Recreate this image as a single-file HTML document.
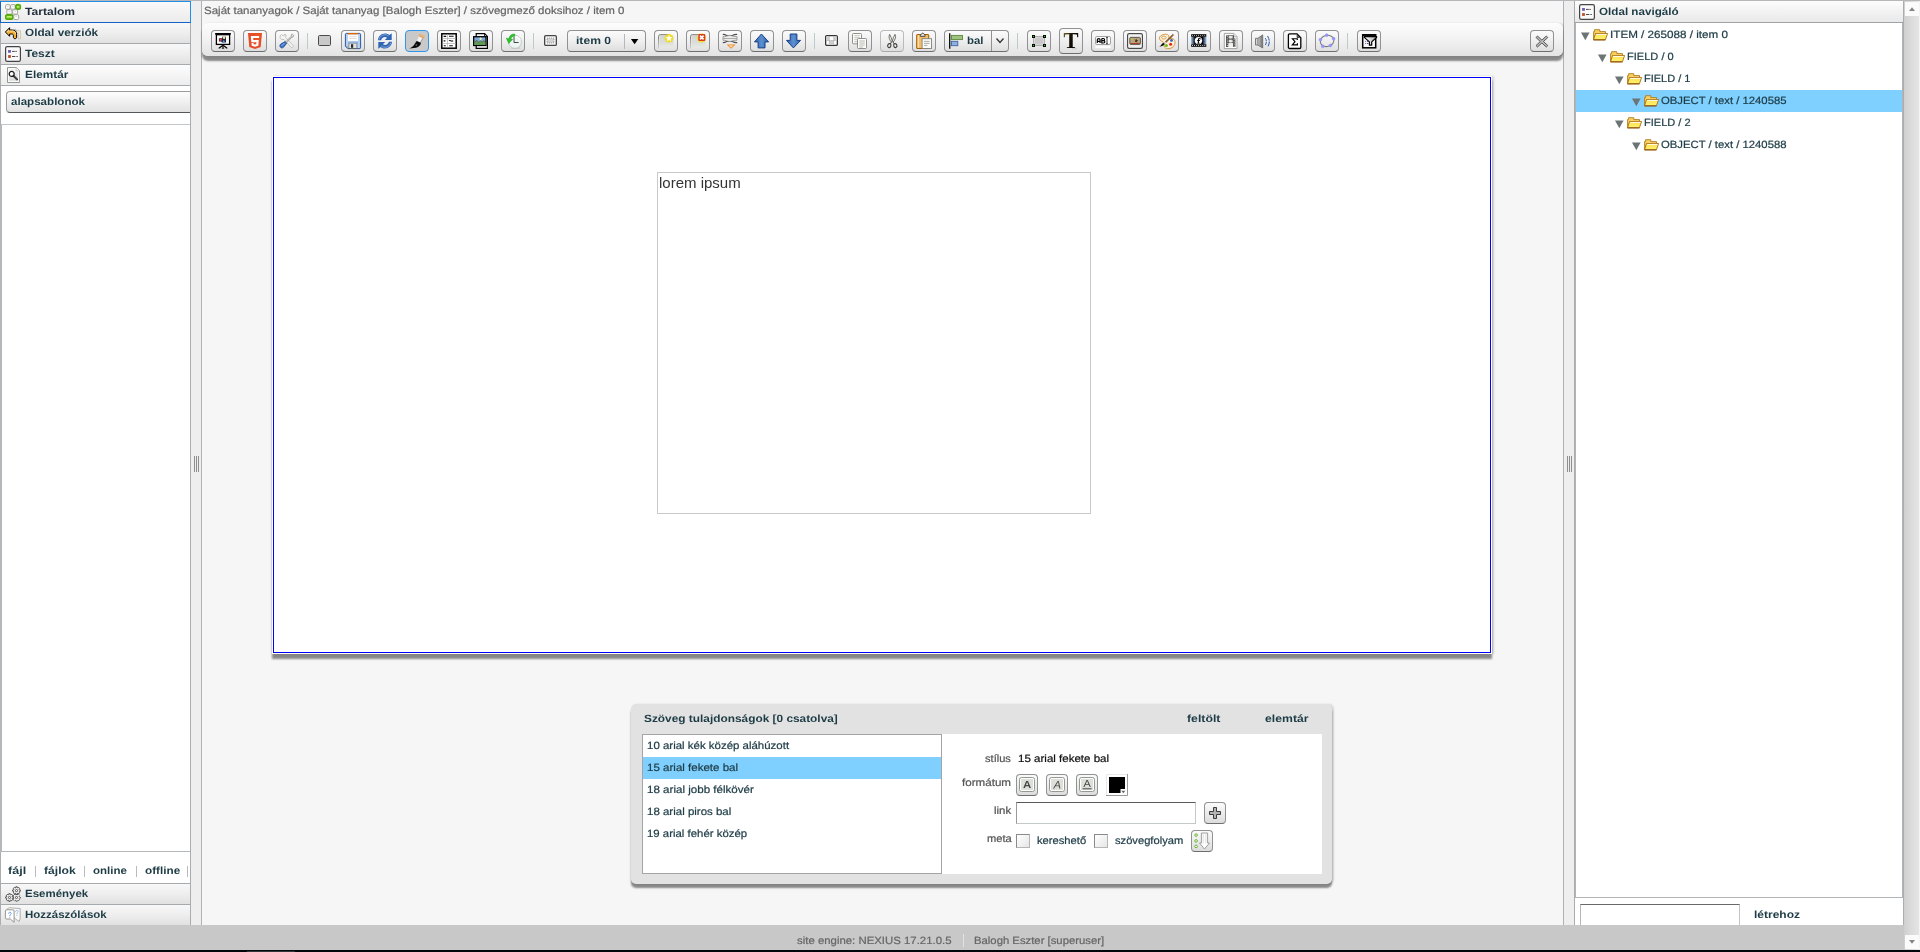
<!DOCTYPE html>
<html><head><meta charset="utf-8"><title>NEXIUS</title>
<style>
*{box-sizing:border-box;margin:0;padding:0}
html,body{width:1920px;height:952px;overflow:hidden;background:#f6f6f6;font-family:"Liberation Sans",sans-serif;font-size:10.5px}
.a{position:absolute}
.t{position:absolute;white-space:nowrap;line-height:14px;height:14px;transform-origin:0 0;font-size:10.5px}
.hd{position:absolute;left:0;width:191px;height:21px;background:linear-gradient(#f8f8f8,#eeeeee 50%,#e1e1e1);border-left:1px solid #a9adb0;border-right:1px solid #a9adb0;border-bottom:1px solid #a7aaad}
.btn{position:absolute;top:30px;width:24px;height:22px;border:1px solid #8f9193;border-bottom-color:#6c6e70;border-radius:4px;background:linear-gradient(#fbfbfb,#efefef 50%,#dedede)}
.btn svg,.ico svg{position:absolute;left:3px;top:2px;width:16px;height:16px;overflow:visible}
.ico{position:absolute}
.sep{position:absolute;top:33px;width:1px;height:16px;background:#bccccc}
.sb{position:absolute;width:22px;height:22px;border:1px solid #8f9193;border-bottom-color:#6c6e70;border-radius:4px;background:linear-gradient(#fbfbfb,#ececec 50%,#dcdcdc)}
</style></head><body>
<!-- top line -->
<div class="a" style="left:0;top:0;width:1920px;height:1px;background:#b9b6b9"></div>
<div class="a" style="left:0;top:1px;width:1920px;height:1px;background:#d2d0d2"></div>

<!-- LEFT PANEL -->
<div class="a" style="left:0;top:1px;width:191px;height:925px;background:#fff;border-left:1px solid #a9adb0;border-right:1px solid #a9adb0"></div>
<div class="hd" style="top:1px;height:22px;border:1px solid #1f8fe8;border-bottom-color:#1663c7;border-left-color:#1663c7;background:linear-gradient(#fafafa,#f2f2f2 50%,#ebebeb)"></div>
<div class="hd" style="top:23px"></div>
<div class="hd" style="top:44px"></div>
<div class="hd" style="top:65px;background:linear-gradient(#fdfdfd,#f5f5f5 50%,#ededed)"></div>
<!-- alapsablonok button -->
<div class="a" style="left:6px;top:91px;width:184px;height:22px;border:1px solid #9a9c9e;border-right:0;border-bottom-color:#55585a;border-radius:4px 0 0 4px;background:linear-gradient(#fdfdfd,#f0f0f0 50%,#e2e2e2)"></div>
<div class="a" style="left:1px;top:124px;width:189px;height:1px;background:#c3c7ca"></div>
<div class="a" style="left:0;top:125px;width:2px;height:727px;background:#b4b8bb"></div>
<div class="a" style="left:1px;top:851px;width:189px;height:1px;background:#b4b8bb"></div>
<!-- file links separators -->
<div class="a" style="left:35px;top:866px;width:1px;height:11px;background:#b7bcbf"></div>
<div class="a" style="left:84px;top:866px;width:1px;height:11px;background:#b7bcbf"></div>
<div class="a" style="left:136px;top:866px;width:1px;height:11px;background:#b7bcbf"></div>
<div class="a" style="left:187px;top:866px;width:1px;height:11px;background:#b7bcbf"></div>
<div class="hd" style="top:883px;height:22px;border-top:1px solid #a7aaad"></div>
<div class="hd" style="top:905px"></div>
<div class="a" style="left:191px;top:1px;width:10px;height:925px;background:#eee"></div>
<!-- left splitter grip -->
<div class="a" style="left:194px;top:456px;width:1px;height:16px;background:#8e8e8e"></div>
<div class="a" style="left:196px;top:456px;width:1px;height:16px;background:#8e8e8e"></div>
<div class="a" style="left:198px;top:456px;width:1px;height:16px;background:#8e8e8e"></div>

<!-- CENTER -->
<div class="a" style="left:201px;top:1px;width:1363px;height:925px;background:#f6f6f6;border-left:1px solid #adb3b8;border-right:1px solid #adb3b8"></div>
<!-- toolbar -->
<div class="a" style="left:202px;top:23px;width:1361px;height:33px;border-radius:6px;background:linear-gradient(#fdfdfd,#f2f2f2 50%,#e3e3e3);box-shadow:0 4.5px 2px rgba(0,0,0,.45),1.5px 0 2px rgba(0,0,0,.13)"></div>
<div class="sep" style="left:307px"></div>
<div class="sep" style="left:533px"></div>
<div class="sep" style="left:814px"></div>
<div class="sep" style="left:1017px"></div>
<div class="sep" style="left:1347px"></div>
<div class="btn" style="left:211px"><svg viewBox="0 0 16 16"><rect x="0" y="0" width="16" height="1.800" rx=".7" fill="#000"/><rect x="1.400" y="1.700" width="13.200" height="9.700" fill="#fff" stroke="#000" stroke-width="1.300"/><path d="M3.900 5.200h3.300V3.800h3.800v5.800H6.900L6.200 8.600H3.900z" fill="#1b2440"/><rect x="4.600" y="5.700" width="2.100" height="2.100" fill="#ee4426"/><circle cx="9.100" cy="4.800" r="1.250" fill="#ffe88c"/><path d="M7.200 9.200L8.700 6.700l1.500 2.500z" fill="#5f90d2"/><path d="M8 11.500V16" stroke="#000" stroke-width="1.200"/><path d="M7.300 12.700L4.200 14.900M8.700 12.700L11.800 14.900" stroke="#000" stroke-width="1.200" stroke-linecap="round"/><ellipse cx="8" cy="15.300" rx="6.500" ry=".6" fill="#000" opacity=".1"/></svg></div>
<div class="btn" style="left:243px"><svg viewBox="0 0 16 16"><path d="M1 0h14l-1.300 13.900L8 16l-5.700-2.100z" fill="#e44d26"/><path d="M8 1.100v13.700l4.600-1.700 1.100-12z" fill="#ea5528"/><path d="M3.800 2.900h8.400l-.2 2.200H6.200l.15 1.900h5.450l-.5 5.700L8 13.700l-3.300-1-.2-2.700h2.100l.1 1.200L8 11.500l1.300-.3.150-2H4.300z" fill="#fff"/></svg></div>
<div class="btn" style="left:275px"><svg viewBox="0 0 16 16"><path d="M1.300 2.700l1.300-1.300 1.300 1.500 1.200-.1.500-1.600 1.500.8-.5 2.600 7.200 7.700c.6.700.5 1.400 0 1.900s-1.300.4-1.900-.2L5 6.400 2.700 6.700 1 4.400z" fill="#f6f6f4" stroke="#b4b5ae" stroke-width=".8"/><path d="M12.900.9l1.900 1.500-.9 1.700-1.100.1-5 5.400-.9-.9 5.100-5.200z" fill="#e4e4e2" stroke="#7f807a" stroke-width=".7"/><path d="M12.900 1.600l1.100.9" stroke="#fff" stroke-width=".7"/><path d="M6 8.600l1.700 1.600-3 3.900c-.9 1-2.300 1.100-3.200.2-.9-.9-.8-2.300.2-3.200z" fill="#3f74c0" stroke="#1d4a94" stroke-width=".8"/><path d="M2.600 12.900l2.700-2.700" stroke="#9dbcea" stroke-width="1"/></svg></div>
<div class="btn" style="left:341px"><svg viewBox="0 0 16 16"><path d="M1.300.4h13.400c.5 0 .9.400.9.900v13.400c0 .5-.4.900-.9.900H2.800L.4 13.200V1.300c0-.5.400-.9.900-.9z" fill="#8fb4e3" stroke="#1f4e9c" stroke-width=".9"/><path d="M1.300 1h1.500v12.300l-1.500-.5z" fill="#c6dbf4"/><path d="M13.200 1h1.500v14h-1.500z" fill="#c6dbf4"/><rect x="3" y="0" width="10" height="1.600" fill="#e06a00"/><rect x="3" y="1.600" width="10" height="6.400" fill="#fff"/><path d="M4.200 3.800h7.600M4.200 5.600h7.600" stroke="#d0d0d0" stroke-width=".7"/><rect x="3" y="7.800" width="10" height=".6" fill="#dfe9f6"/><rect x="4" y="10.200" width="7.800" height="5.500" fill="#e3e3e0" stroke="#777" stroke-width=".5"/><rect x="6" y="11.200" width="2.200" height="3.600" fill="#2b2b2b"/><rect x="4" y="15.200" width="7.800" height=".8" fill="#555"/></svg></div>
<div class="btn" style="left:373px"><svg viewBox="0 0 16 16"><path d="M1 7.300C1.200 3.400 4.300.6 8 .6c1.700 0 3.200.5 4.400 1.500L14.700.2v6.900H7.800l2.300-2.400C9.500 4.200 8.800 4 8 4 5.900 4 4.400 5.400 4.200 7.300z" fill="#2f66b3"/><path d="M15 8.700c-.2 3.900-3.300 6.700-7 6.700-1.700 0-3.200-.5-4.400-1.500L1.300 15.800V8.900h6.900l-2.300 2.400c.6.500 1.300.7 2.100.7 2.100 0 3.600-1.400 3.800-3.300z" fill="#2f66b3"/><path d="M2.200 6.300C2.800 3.600 5.200 1.700 8 1.700c1.500 0 2.800.5 3.800 1.400" stroke="#7fa8dd" stroke-width=".9" fill="none"/><path d="M13.800 9.700c-.6 2.700-3 4.600-5.800 4.600-1.500 0-2.800-.5-3.800-1.400" stroke="#7fa8dd" stroke-width=".9" fill="none"/></svg></div>
<div class="btn" style="left:405px;background:#c9c9c9;border-color:#2f96ee"><svg viewBox="0 0 16 16"><g transform="translate(13.030 2.320) rotate(26)"><rect x="-2.900" y="-.4" width="5.800" height="2.900" fill="#e3a463"/><path d="M-2.700 .5h5.400" stroke="#f2c797" stroke-width=".6"/><path d="M-2.700 2.400H2.700L2.200 7.400H-2.200z" fill="#f4f4f4"/><path d="M1.500 2.400H2.700L2.200 7.400H1.200z" fill="#9a9a9a"/><path d="M-2.700 2.400h.8l.2 5h-.5z" fill="#d6d6d6"/></g><path d="M7.840 7.920L11.800 9.860C12 11.500 11 13 9 14 6.500 15.200 3.500 15 .4 15.600 2.400 14.600 3.800 13.600 4.800 12.300 5.800 11 6.400 9.200 7.840 7.920z" fill="#0a0a0a"/><circle cx="7.400" cy="12" r=".9" fill="#5c5c5c"/></svg></div>
<div class="btn" style="left:437px"><svg viewBox="0 0 16 16"><rect x=".8" y=".8" width="14.400" height="14.400" fill="#fff" stroke="#000" stroke-width="1.500"/><path d="M6.500 1.500v13M1.500 5.500h13M1.500 10.500h13" stroke="#b8b8b8" stroke-width=".8"/><path d="M2.600 3.400h2.600M8 3.200h4.600M2.600 7.900h1.800M8 7.800c1.200-1 2.200 1.200 4.200 0M2.800 12.800h2M8.200 12.800h3.600" stroke="#111" stroke-width="1.100" fill="none"/></svg></div>
<div class="btn" style="left:469px"><svg viewBox="0 0 16 16"><path d="M3.200.6h8.400L14.400 3.400v12H3.200z" fill="#fff" stroke="#000" stroke-width="1.200"/><path d="M11.500.8v2.800h2.800" fill="none" stroke="#000" stroke-width=".8"/><rect x=".7" y="3.700" width="12.300" height="8.800" fill="#7ea9da" stroke="#000" stroke-width="1.300"/><path d="M1.400 9.500l2.200-2.400 2 2.300 2-1.700 1.700 1.300 1.500-1.600 1.600 2V11.900H1.400z" fill="#5d9a52"/><path d="M1.400 9.500l2.200-2.400 2 2.300 2-1.700 1.700 1.300 1.500-1.600 1.600 2" fill="none" stroke="#5a3a1a" stroke-width=".5"/><path d="M7.600 4.200l.6 1.100 1.100.5-1.100.6-.6 1.100-.6-1.100-1.100-.6 1.100-.5z" fill="#fff7a8"/></svg></div>
<div class="btn" style="left:501px"><svg viewBox="0 0 16 16"><ellipse cx="10.500" cy="15" rx="5" ry=".9" fill="#000" opacity=".12"/><circle cx="10" cy="8.800" r="6.500" fill="#eef6f4" stroke="#b9c2c0" stroke-width=".8"/><path d="M5 9.500a5.500 5.500 0 0 1 10.400-2.500" fill="none" stroke="#fff" stroke-width="1.200" opacity=".8"/><path d="M9 3.600v5.900h4.600" fill="none" stroke="#333" stroke-width=".9"/><path d="M9.700 1C6.600.8 4.300 2.700 3.900 5.700L1.300 5.200l2.500 5.300 3.800-4.300-1.800-.3C6.200 4.200 7.600 3.100 9.700 3.200z" fill="#2fc22f" stroke="#1f9a1f" stroke-width=".5"/></svg></div>
<div class="btn" style="left:654px"><svg viewBox="0 0 16 16"><defs><linearGradient id="tg1" x1="0" y1="0" x2="0" y2="1"><stop offset="0" stop-color="#d3d6d0"/><stop offset=".55" stop-color="#dcded9"/><stop offset="1" stop-color="#e9ebe7" stop-opacity=".6"/></linearGradient><linearGradient id="tb1" x1="0" y1="0" x2="0" y2="1"><stop offset="0" stop-color="#666"/><stop offset="1" stop-color="#999" stop-opacity=".3"/></linearGradient></defs><path d="M.5 15.500V3.400c0-.900.600-1.600 1.600-1.600h9.500" fill="none" stroke="url(#tb1)" stroke-width="1"/><path d="M1.400 15.500V3.800c0-.600.400-1 1-1H15.500v12.700z" fill="url(#tg1)"/><circle cx="11" cy="5.200" r="4.300" fill="#f2dc1a" opacity=".9"/><path d="M11 1.900l1 2.100 2.300.3-1.700 1.600.4 2.300-2-1.100-2 1.100.4-2.300-1.700-1.600 2.300-.3z" fill="#fffef0"/></svg></div>
<div class="btn" style="left:686px"><svg viewBox="0 0 16 16"><defs><linearGradient id="tg2" x1="0" y1="0" x2="0" y2="1"><stop offset="0" stop-color="#d3d6d0"/><stop offset=".55" stop-color="#dcded9"/><stop offset="1" stop-color="#e9ebe7" stop-opacity=".6"/></linearGradient><linearGradient id="tb2" x1="0" y1="0" x2="0" y2="1"><stop offset="0" stop-color="#666"/><stop offset="1" stop-color="#999" stop-opacity=".3"/></linearGradient></defs><path d="M.5 15.500V3.400c0-.900.600-1.600 1.600-1.600h9.500" fill="none" stroke="url(#tb2)" stroke-width="1"/><path d="M1.400 15.500V3.800c0-.600.400-1 1-1H15.500v12.700z" fill="url(#tg2)"/><circle cx="11.500" cy="5" r="4.700" fill="#f2e21a" opacity=".75"/><rect x="8.300" y="1" width="7" height="7" rx="1.100" fill="#dc3a1c"/><path d="M10 2.700l3.600 3.600M13.600 2.700L10 6.300" stroke="#fff" stroke-width="1.700"/></svg></div>
<div class="btn" style="left:718px"><svg viewBox="0 0 16 16"><path d="M.8 1.500c2.500-.6 3.800 1.700 6.700 1.700s4.500-2.300 7.700-1.700M.8 9.500c2.500.6 3.800-1.700 6.700-1.700s4.500 2.300 7.700 1.700" fill="none" stroke="#4a4c48" stroke-width="1.200"/><path d="M1 3.600c2.600.5 4-1.200 6.600-1.200s4.200 1.700 7.400 1.200v3.700c-3.200-.5-4.800 1.200-7.400 1.200S3.600 6.800 1 7.300z" fill="#ecedeb" stroke="#7a7c78" stroke-width=".7"/><path d="M1.200 5.500h13.600" stroke="#9a9c98" stroke-width=".8"/><path d="M4.600 11.400h9L9.100 15.800z" fill="#f08a24"/><path d="M6.600 12.300h5L9.100 14.700z" fill="#fbd3a4"/></svg></div>
<div class="btn" style="left:750px"><svg viewBox="0 0 16 16"><defs><linearGradient id="ua" x1="0" y1="0" x2="1" y2="0"><stop offset="0" stop-color="#2f62a8"/><stop offset=".5" stop-color="#5c90d2"/><stop offset="1" stop-color="#2f62a8"/></linearGradient></defs><path d="M7.400 1L14.600 8.900H11V14.900H4.100V8.900H.5z" fill="url(#ua)" stroke="#173f86" stroke-width="1" stroke-linejoin="round"/></svg></div>
<div class="btn" style="left:782px"><svg viewBox="0 0 16 16"><defs><linearGradient id="da" x1="0" y1="0" x2="1" y2="0"><stop offset="0" stop-color="#2f62a8"/><stop offset=".5" stop-color="#5c90d2"/><stop offset="1" stop-color="#2f62a8"/></linearGradient></defs><path d="M7.400 14.900L14.600 7.400H10.900V1H4.200V7.400H.5z" fill="url(#da)" stroke="#173f86" stroke-width="1" stroke-linejoin="round"/></svg></div>
<div class="btn" style="left:848px"><svg viewBox="0 0 16 16"><rect x=".5" y=".5" width="9" height="10.300" rx=".9" fill="#fdfdfc" stroke="#83857f" stroke-width=".9"/><path d="M2.300 2.700h5.500M2.300 4.700h5.500M2.300 6.700h3M2.300 8.700h3" stroke="#b9bbb4" stroke-width=".9"/><rect x="5.500" y="5.500" width="9" height="10" rx=".9" fill="#fdfdfc" stroke="#83857f" stroke-width=".9"/><path d="M7.300 8h5.500M7.300 10h5.500M7.300 12h5.500M7.300 14h3.800" stroke="#b0b2ab" stroke-width=".9"/></svg></div>
<div class="btn" style="left:880px;border-color:#b9bbbd;border-bottom-color:#a6a8aa"><svg viewBox="0 0 16 16"><path d="M5.600 1.400C4.300 4 5.400 6.700 7.400 9.200L8.200 8C7.600 5.600 6.900 3.400 5.600 1.400z" fill="#f2f2ee" stroke="#3d3d3a" stroke-width=".7"/><path d="M11 1.400c1.300 2.600.2 5.300-1.800 7.800L8.400 8c.6-2.400 1.300-4.600 2.600-6.600z" fill="#f2f2ee" stroke="#3d3d3a" stroke-width=".7"/><path d="M7.400 9.200L6.300 11M9.200 9.200l1.100 1.800" stroke="#3d3d3a" stroke-width="1"/><ellipse cx="5.300" cy="12.600" rx="1.600" ry="2" fill="none" stroke="#3d3d3a" stroke-width="1.100" transform="rotate(20 5.300 12.600)"/><ellipse cx="11.300" cy="12.600" rx="1.600" ry="2" fill="none" stroke="#3d3d3a" stroke-width="1.100" transform="rotate(-20 11.300 12.600)"/></svg></div>
<div class="btn" style="left:912px"><svg viewBox="0 0 16 16"><rect x=".7" y="1.500" width="12" height="14" rx="1" fill="#f3bd6a" stroke="#a8620a" stroke-width="1.100"/><path d="M1.700 2.600h1.300v12h-1.300z" fill="#fbe0b0"/><path d="M4.300 3.300C4.300 1.800 5 .9 5.700.9c.2-.6.600-.8 1-.8s.8.200 1 .8C8.400.9 9.100 1.800 9.100 3.300z" fill="#eceeea" stroke="#2e3436" stroke-width=".9"/><rect x="6.100" y="5.700" width="9.400" height="9.800" fill="#fafaf8" stroke="#7f817b" stroke-width=".9"/><path d="M8 8.400h5.600M8 10.400h5.600M8 12.400h3.400" stroke="#aaaca6" stroke-width="1"/></svg></div>
<div class="btn" style="left:1027px"><svg viewBox="0 0 16 16"><rect x="2.500" y="3.500" width="11" height="9" fill="#c9c9c9" stroke="#a2a2a2" stroke-width=".8"/><rect x="3.300" y="4.300" width="9.400" height="7.400" fill="none" stroke="#e6e6e6" stroke-width=".5"/><rect x="1" y="2" width="3" height="3" fill="#000"/><rect x="1.9" y="2.9" width="1.200" height="1.200" fill="#19d019"/><rect x="12" y="2" width="3" height="3" fill="#000"/><rect x="12.9" y="2.9" width="1.200" height="1.200" fill="#19d019"/><rect x="1" y="11" width="3" height="3" fill="#000"/><rect x="1.9" y="11.9" width="1.200" height="1.200" fill="#19d019"/><rect x="12" y="11" width="3" height="3" fill="#000"/><rect x="12.9" y="11.9" width="1.200" height="1.200" fill="#19d019"/></svg></div>
<div class="btn" style="left:1059px;top:28px;height:26px"><svg style="top:4px" viewBox="0 0 16 16"><defs><linearGradient id="tgr" x1="0" y1="0" x2="1" y2="1"><stop offset="0" stop-color="#7a6426"/><stop offset=".3" stop-color="#1a1408"/><stop offset="1" stop-color="#000"/></linearGradient></defs><path d="M1.300 1.100l.9 .9 M9 15.800h5" stroke="#000" stroke-width="1" opacity=".12"/><path d="M3.87 15.1V14.28L6.23 13.97V1.19H5.66Q3.13 1.19 2.1 1.42L1.81 4.22H0.8V0H15.2V4.22H14.18L13.88 1.42Q12.97 1.22 10.26 1.22H9.72V13.97L12.07 14.28V15.1Z" fill="url(#tgr)"/></svg></div>
<div class="btn" style="left:1091px"><svg viewBox="0 0 16 16"><rect x=".4" y="12.600" width="15.200" height="2.600" fill="#fff" opacity=".9"/><rect x=".5" y="3.500" width="15" height="8" rx="1.500" fill="#fff" stroke="#9a9a9a" stroke-width=".9"/><path d="M2.300 10 V6.700 C2.300 5.200 5.100 5.200 5.100 6.700 V10 M2.300 8.300 H5.100" fill="none" stroke="#000" stroke-width="1.200"/><path d="M6.800 5.500 V10 H8.700 C10.200 10 10.200 7.700 8.700 7.700 H6.800 M6.800 5.500 H8.500 C9.900 5.500 9.900 7.700 8.500 7.700" fill="none" stroke="#000" stroke-width="1.200"/><path d="M11 4.300 C11.700 4.300 12 4.600 12 5.100 V10.200 C12 10.700 11.700 11 11 11 M13 4.300 C12.300 4.300 12 4.600 12 5.100 M12 10.200 C12 10.700 12.300 11 13 11" fill="none" stroke="#111" stroke-width=".8"/></svg></div>
<div class="btn" style="left:1123px"><svg viewBox="0 0 16 16"><rect x=".6" y=".6" width="14.800" height="14.800" rx="1.600" fill="#fff" stroke="#484848" stroke-width="1.200"/><rect x="2.300" y="2.300" width="11.400" height="11.400" fill="#ececec"/><rect x="2.800" y="4.400" width="10.600" height="7" rx=".8" fill="#bfa27a" stroke="#4e4e4e" stroke-width=".9"/><rect x="3.300" y="10" width="9.600" height="1" fill="#a8432a"/><circle cx="4.700" cy="6.300" r=".9" fill="#a6d83a"/><path d="M9.200 5.200l.6 1.700 1.700.4-1.500.8.300 1.800-1.100-1.200-1.600.6.900-1.500-1.200-1.300 1.700.2z" fill="#3a3226"/></svg></div>
<div class="btn" style="left:1155px"><svg viewBox="0 0 16 16"><path d="M5.300 1.300c2.300-.5 4.300.4 4.600 2 .2 1.200-.6 2-.1 2.400 1-.4 3.300-1 5 .6 2.300 2.200 1.300 6.300-1.600 8.200-2.700 1.700-6.600 1.600-7.900-.6-.8-1.400.3-2.600 0-3.900C4.900 8.400.7 8.600.4 5.400.2 3.300 2.700 1.800 5.300 1.300z" fill="#fbf2dc" stroke="#d4902e" stroke-width=".9"/><ellipse cx="4.900" cy="4.600" rx="2.200" ry="1.500" fill="#f2f2f2" stroke="#d4902e" stroke-width=".8"/><circle cx="12.500" cy="7.400" r="1.400" fill="#2d62c0"/><circle cx="11.600" cy="11.300" r="1.500" fill="#e8241a"/><circle cx="7.400" cy="12.400" r="1.500" fill="#6cba1e"/><path d="M13.800 1.200l.9.900-7.700 7.600-.9-.9z" fill="#8a5a2a" stroke="#6b4218" stroke-width=".4"/><path d="M6.100 8.800l.9.900-1.300 1.300-.9-.9z" fill="#f4f4f4" stroke="#888" stroke-width=".3"/><path d="M4.800 10.100l.9.900c-.6 1.500-2.600 2.400-5.400 2.700 1.500-.7 1.600-1.500 2.300-2.400.6-.8 1.300-1.200 2.200-1.200z" fill="#111"/></svg></div>
<div class="btn" style="left:1187px"><svg viewBox="0 0 16 16"><defs><linearGradient id="fl" x1="0" y1="0" x2="1" y2="0"><stop offset="0" stop-color="#b4c4d8"/><stop offset=".12" stop-color="#54749c"/><stop offset=".26" stop-color="#050505"/><stop offset=".74" stop-color="#050505"/><stop offset=".88" stop-color="#54749c"/><stop offset="1" stop-color="#b4c4d8"/></linearGradient></defs><rect x="0" y="3.500" width="15.500" height="8.200" fill="url(#fl)"/><rect x=".2" y="1.200" width="15.100" height="2.500" fill="#000"/><rect x=".2" y="11.400" width="15.100" height="2.400" fill="#000"/><rect x="1.00" y="2" width="1" height="1" rx=".4" fill="#fff"/><rect x="3.05" y="2" width="1" height="1" rx=".4" fill="#fff"/><rect x="5.10" y="2" width="1" height="1" rx=".4" fill="#fff"/><rect x="7.15" y="2" width="1" height="1" rx=".4" fill="#fff"/><rect x="9.20" y="2" width="1" height="1" rx=".4" fill="#fff"/><rect x="11.25" y="2" width="1" height="1" rx=".4" fill="#fff"/><rect x="13.30" y="2" width="1" height="1" rx=".4" fill="#fff"/><rect x="1.00" y="12.100" width="1" height="1" rx=".4" fill="#fff"/><rect x="3.05" y="12.100" width="1" height="1" rx=".4" fill="#fff"/><rect x="5.10" y="12.100" width="1" height="1" rx=".4" fill="#fff"/><rect x="7.15" y="12.100" width="1" height="1" rx=".4" fill="#fff"/><rect x="9.20" y="12.100" width="1" height="1" rx=".4" fill="#fff"/><rect x="11.25" y="12.100" width="1" height="1" rx=".4" fill="#fff"/><rect x="13.30" y="12.100" width="1" height="1" rx=".4" fill="#fff"/><circle cx="7.500" cy="7.600" r="3.700" fill="#fff"/><path d="M9.600 5.600C8.300 5 7.400 5.600 7.400 6.900v3.300M6.200 7.500h2.700M6.400 10.300h2.200" stroke="#000" stroke-width="1.100" fill="none"/><rect x="8.600" y="5.200" width="2.200" height="1.800" fill="#999" opacity=".7"/></svg></div>
<div class="btn" style="left:1219px"><svg viewBox="0 0 16 16"><path d="M1.300.4h9.500l3.200 3.200v12H1.300z" fill="#fdfdfd" stroke="#9c9c9c" stroke-width=".9"/><path d="M10.700.6v3.100h3.100" fill="#e4e4e4" stroke="#9c9c9c" stroke-width=".7"/><rect x="3" y="2.400" width="2.500" height="11.600" fill="#4c4c4a"/><rect x="9.900" y="5.400" width="2.500" height="8.600" fill="#4c4c4a"/><path d="M9.900 2.400h1v3h-1z" fill="#4c4c4a"/><rect x="5.500" y="2.700" width="4.400" height="3.100" fill="#dededc" stroke="#4c4c4a" stroke-width=".7"/><rect x="5.500" y="6.500" width="4.400" height="3.300" fill="#dededc" stroke="#4c4c4a" stroke-width=".7"/><path d="M7.700 2.700v3.100M5.500 4.200h4.400M7.700 6.500v3.300M5.500 8.100h4.400" stroke="#f4f4f4" stroke-width=".5"/><rect x="5.500" y="10.500" width="4.400" height="3.500" fill="#f0f0f0"/><rect x="3.800" y="3.20" width=".9" height="1" fill="#e8e8e8"/><rect x="3.800" y="5.40" width=".9" height="1" fill="#e8e8e8"/><rect x="3.800" y="7.60" width=".9" height="1" fill="#e8e8e8"/><rect x="3.800" y="9.80" width=".9" height="1" fill="#e8e8e8"/><rect x="3.800" y="12.00" width=".9" height="1" fill="#e8e8e8"/><rect x="10.700" y="6.20" width=".9" height="1" fill="#e8e8e8"/><rect x="10.700" y="8.40" width=".9" height="1" fill="#e8e8e8"/><rect x="10.700" y="10.60" width=".9" height="1" fill="#e8e8e8"/><rect x="10.700" y="12.80" width=".9" height="1" fill="#e8e8e8"/></svg></div>
<div class="btn" style="left:1251px"><svg viewBox="0 0 16 16"><defs><linearGradient id="sp" x1="0" y1="0" x2="1" y2="0"><stop offset="0" stop-color="#e4e4e4"/><stop offset=".5" stop-color="#b0b0b0"/><stop offset="1" stop-color="#707070"/></linearGradient></defs><path d="M.5 5.300h2.300L7.700 1.900v13.100L2.800 12H.5z" fill="url(#sp)" stroke="#6e6e6e" stroke-width=".9" stroke-linejoin="round"/><path d="M2.800 5.300v6.700" stroke="#777" stroke-width=".7"/><path d="M10.300 5.200c1.400 2 1.400 5 0 6.900" fill="none" stroke="#2c5cab" stroke-width="1" stroke-dasharray="3.200 .7 3.200"/><path d="M12.500 3c2.400 3.300 2.400 8 0 11.300" fill="none" stroke="#2c5cab" stroke-width="1" stroke-dasharray="5 .8 5"/></svg></div>
<div class="btn" style="left:1283px"><svg viewBox="0 0 16 16"><path d="M2.700.9h7.300l3.800 3.800v9.500c0 .8-.5 1.300-1.300 1.300H2.700c-.8 0-1.300-.5-1.300-1.300V2.200c0-.8.500-1.300 1.300-1.300z" fill="#fff" stroke="#000" stroke-width="1.300"/><path d="M9.600 1.300l3.800 3.800h-2.700c-.7 0-1.100-.4-1.100-1.100z" fill="#4a4a4a"/><path d="M10.300 7.100V5.700H5.400L8 8.700 5.300 11.800h5.100V10.300" fill="none" stroke="#000" stroke-width="1.150"/></svg></div>
<div class="btn" style="left:1315px"><svg viewBox="0 0 16 16"><ellipse cx="8.100" cy="7.900" rx="6.900" ry="5.600" transform="rotate(-14 8.100 7.900)" fill="none" stroke="#7a7a7a" stroke-width="1.100"/><circle cx="7.7" cy="2.2" r="1.450" fill="#9a9aff" stroke="#7f7fe8" stroke-width=".4"/><circle cx="14.6" cy="5.7" r="1.450" fill="#9a9aff" stroke="#7f7fe8" stroke-width=".4"/><circle cx="1.4" cy="6.7" r="1.450" fill="#9a9aff" stroke="#7f7fe8" stroke-width=".4"/><circle cx="11.5" cy="12.5" r="1.450" fill="#9a9aff" stroke="#7f7fe8" stroke-width=".4"/><circle cx="3.8" cy="13.4" r="1.450" fill="#9a9aff" stroke="#7f7fe8" stroke-width=".4"/></svg></div>
<div class="btn" style="left:1357px"><svg viewBox="0 0 16 16"><defs><linearGradient id="fn" x1="0" y1="0" x2="1" y2="0"><stop offset="0" stop-color="#fff"/><stop offset=".5" stop-color="#d8d8d8"/><stop offset="1" stop-color="#9a9a9a"/></linearGradient></defs><rect x="1.700" y="1.800" width="13" height="13" fill="#fafafa" stroke="#000" stroke-width="1.500"/><path d="M1.700 2.100h13" stroke="#000" stroke-width="1.600"/><path d="M3.300 3.600h12.300v.8l-4.900 4.500v3.300H8.400V8.900L3.300 4.400z" fill="url(#fn)" stroke="#000" stroke-width="1.200" stroke-linejoin="round"/><path d="M4.200 8.400h.9M6 8.400h1M4.200 10.500h.9M6 10.500h1.400" stroke="#3a3aa0" stroke-width=".9"/></svg></div>
<div class="btn" style="left:1530px"><svg viewBox="0 0 16 16"><path d="M3.500 3l4.400 4.100L12.300 3l1.500 1.500-4.300 4 4.300 4.100-1.500 1.400-4.400-4-4.400 4L2 12.600l4.300-4.100L2 4.500z" fill="#b9b9b9" stroke="#4e4e4e" stroke-width=".9" stroke-linejoin="round"/></svg></div>
<div class="btn" style="left:567px;width:79px"></div><div class="a" style="left:624px;top:34px;width:1px;height:15px;background:#b5b8ba"></div>
<svg class="a" style="left:629px;top:38px" width="11" height="8"><path d="M1.900 1 H9.300 L5.600 6.200Z" fill="#000"/></svg>
<div class="btn" style="left:944px;width:65px"></div><svg class="a" style="left:949px;top:33px" width="16" height="16" viewBox="0 0 16 16"><path d="M.7.300v15.400" stroke="#111" stroke-width="1.400"/><rect x="2.500" y="2.400" width="11" height="4.200" fill="#9fc27e" stroke="#5b8a3c" stroke-width=".9"/><rect x="2.500" y="8.300" width="6.300" height="4.400" fill="#8fb0dc" stroke="#3c66a4" stroke-width=".9"/></svg><div class="a" style="left:991px;top:31px;width:1px;height:20px;background:#8f9193"></div>
<svg class="a" style="left:995px;top:37px" width="10" height="8"><path d="M1.5 1.5 L5 5.5 L8.5 1.5" fill="none" stroke="#333" stroke-width="1.3"/></svg>
<div class="a" style="left:318px;top:35px;width:13px;height:11px;background:#c9c9c9;border:1px solid #4a4a4a;border-radius:1.5px"></div>
<svg class="a" style="left:544px;top:35px" width="13" height="11" viewBox="0 0 13 11"><rect x=".65" y=".65" width="11.700" height="9.700" rx="1.200" fill="#f7f7f7" stroke="#454545" stroke-width="1.300"/><rect x="3" y="3" width="7" height="5" fill="#d2d2d2" stroke="#8a8a8a" stroke-width=".8" stroke-dasharray="1 1"/></svg>
<svg class="a" style="left:825px;top:35px" width="13" height="11" viewBox="0 0 13 11"><rect x=".65" y=".65" width="11.700" height="9.700" rx="1.200" fill="#fff" stroke="#353535" stroke-width="1.300"/><rect x="1.300" y="1.300" width="3" height="4.200" fill="#cfcfcf"/><rect x="8.700" y="1.300" width="3" height="4.200" fill="#cfcfcf"/><rect x="4.300" y="5.500" width="4.400" height="4.200" fill="#cfcfcf"/><path d="M4.300 1.500v8M8.700 1.500v8M1.500 5.500h10" stroke="#8a8a8a" stroke-width=".7" stroke-dasharray="1 1"/></svg>
<!-- stage -->
<div class="a" style="left:272px;top:76px;width:1220px;height:578px;background:#fffff2;box-shadow:0 4.5px 2px rgba(0,0,0,.45),1.5px 0 2px rgba(0,0,0,.13)"></div>
<div class="a" style="left:273px;top:77px;width:1218px;height:576px;background:#fff;border:1px solid #0000ff"></div>
<div class="a" style="left:657px;top:172px;width:434px;height:342px;border:1px solid #c9c9c9;background:#fff"></div>
<div class="a" style="left:659px;top:174px;font-size:15px;line-height:17px;color:#333;will-change:transform">lorem ipsum</div>

<!-- properties panel -->
<div class="a" style="left:631px;top:704px;width:701px;height:180px;background:#e2e2e2;border-radius:5px;box-shadow:0 4px 2px rgba(0,0,0,.45),1.5px 0 2px rgba(0,0,0,.13)"></div>
<div class="a" style="left:642px;top:734px;width:300px;height:140px;background:#fff;border:1px solid #a4a4a4"></div>
<div class="a" style="left:942px;top:734px;width:380px;height:140px;background:#fff"></div>
<div class="a" style="left:643px;top:757px;width:298px;height:22px;background:#7fd0ff"></div>
<!-- format buttons -->
<div class="sb" style="left:1016px;top:774px"></div>
<div class="sb" style="left:1046px;top:774px"></div>
<div class="sb" style="left:1076px;top:774px"></div>
<div class="a" style="left:1016px;top:802px;width:180px;height:22px;background:#fff;border:1px solid #c3c9c9;border-top-color:#5a5a5a;border-left-color:#9a9a9a"></div>
<div class="sb" style="left:1204px;top:802px"></div>
<div class="a" style="left:1016px;top:834px;width:14px;height:14px;background:linear-gradient(135deg,#fff,#e6e6e6);border:1px solid #8a8a8a;border-right-color:#b5b5b5;border-bottom-color:#b5b5b5"></div>
<div class="a" style="left:1094px;top:834px;width:14px;height:14px;background:linear-gradient(135deg,#fff,#e6e6e6);border:1px solid #8a8a8a;border-right-color:#b5b5b5;border-bottom-color:#b5b5b5"></div>
<div class="sb" style="left:1191px;top:830px"></div>

<!-- right splitter -->
<div class="a" style="left:1564px;top:1px;width:10px;height:925px;background:#eee"></div>
<div class="a" style="left:1567px;top:456px;width:1px;height:16px;background:#8e8e8e"></div>
<div class="a" style="left:1569px;top:456px;width:1px;height:16px;background:#8e8e8e"></div>
<div class="a" style="left:1571px;top:456px;width:1px;height:16px;background:#8e8e8e"></div>

<!-- RIGHT PANEL -->
<div class="a" style="left:1574px;top:1px;width:330px;height:925px;background:#fff;border-left:1px solid #a9adb0;border-right:1px solid #a9adb0"></div>
<div class="a" style="left:1574px;top:1px;width:330px;height:22px;background:linear-gradient(#fdfdfd,#f3f3f3 45%,#e9e9e9);border:1px solid #a9adb0;border-top:0;border-bottom-color:#a0a3a6"></div>
<div class="a" style="left:1575px;top:23px;width:328px;height:875px;background:#fff;border:1px solid #b1b5b8;border-top:0"></div>
<div class="a" style="left:1576px;top:90px;width:326px;height:22px;background:#7fd0ff"></div>
<svg class="a" style="left:1581px;top:31.5px" width="9" height="9"><path d="M0 0.5 H8.6 L4.3 8.2Z" fill="#6d7475"/></svg>
<svg class="a" style="left:1593px;top:29px" width="16" height="12" viewBox="0 0 16 12"><defs><linearGradient id="ff35" x1="0" y1="0" x2="0" y2="1"><stop offset="0" stop-color="#ffe052"/><stop offset="1" stop-color="#fff26e"/></linearGradient></defs><path d="M.6 10.600V2.600h1V.700h5.200v1.900h5.700v2" fill="#fbd25c" stroke="#b07a22" stroke-width=".9" stroke-linejoin="round"/><path d="M.5 10.800L2.500 4.500H14.600L12.400 10.800z" fill="url(#ff35)" stroke="#a86c14" stroke-width=".9" stroke-linejoin="round"/><path d="M3.100 5.400H13.500" stroke="#fffdf0" stroke-width="1"/><path d="M.5 10.900H12.400" stroke="#8a4c04" stroke-width="1"/></svg>
<svg class="a" style="left:1598px;top:53.5px" width="9" height="9"><path d="M0 0.5 H8.6 L4.3 8.2Z" fill="#6d7475"/></svg>
<svg class="a" style="left:1610px;top:51px" width="16" height="12" viewBox="0 0 16 12"><defs><linearGradient id="ff57" x1="0" y1="0" x2="0" y2="1"><stop offset="0" stop-color="#ffe052"/><stop offset="1" stop-color="#fff26e"/></linearGradient></defs><path d="M.6 10.600V2.600h1V.700h5.200v1.900h5.700v2" fill="#fbd25c" stroke="#b07a22" stroke-width=".9" stroke-linejoin="round"/><path d="M.5 10.800L2.500 4.500H14.600L12.400 10.800z" fill="url(#ff57)" stroke="#a86c14" stroke-width=".9" stroke-linejoin="round"/><path d="M3.100 5.400H13.500" stroke="#fffdf0" stroke-width="1"/><path d="M.5 10.900H12.400" stroke="#8a4c04" stroke-width="1"/></svg>
<svg class="a" style="left:1615px;top:75.5px" width="9" height="9"><path d="M0 0.5 H8.6 L4.3 8.2Z" fill="#6d7475"/></svg>
<svg class="a" style="left:1627px;top:73px" width="16" height="12" viewBox="0 0 16 12"><defs><linearGradient id="ff79" x1="0" y1="0" x2="0" y2="1"><stop offset="0" stop-color="#ffe052"/><stop offset="1" stop-color="#fff26e"/></linearGradient></defs><path d="M.6 10.600V2.600h1V.700h5.200v1.900h5.700v2" fill="#fbd25c" stroke="#b07a22" stroke-width=".9" stroke-linejoin="round"/><path d="M.5 10.800L2.500 4.500H14.600L12.400 10.800z" fill="url(#ff79)" stroke="#a86c14" stroke-width=".9" stroke-linejoin="round"/><path d="M3.100 5.400H13.500" stroke="#fffdf0" stroke-width="1"/><path d="M.5 10.900H12.400" stroke="#8a4c04" stroke-width="1"/></svg>
<svg class="a" style="left:1632px;top:97.5px" width="9" height="9"><path d="M0 0.5 H8.6 L4.3 8.2Z" fill="#6d7475"/></svg>
<svg class="a" style="left:1644px;top:95px" width="16" height="12" viewBox="0 0 16 12"><defs><linearGradient id="ff101" x1="0" y1="0" x2="0" y2="1"><stop offset="0" stop-color="#ffe052"/><stop offset="1" stop-color="#fff26e"/></linearGradient></defs><path d="M.6 10.600V2.600h1V.700h5.200v1.900h5.700v2" fill="#fbd25c" stroke="#b07a22" stroke-width=".9" stroke-linejoin="round"/><path d="M.5 10.800L2.500 4.500H14.600L12.400 10.800z" fill="url(#ff101)" stroke="#a86c14" stroke-width=".9" stroke-linejoin="round"/><path d="M3.100 5.400H13.500" stroke="#fffdf0" stroke-width="1"/><path d="M.5 10.900H12.400" stroke="#8a4c04" stroke-width="1"/></svg>
<svg class="a" style="left:1615px;top:119.5px" width="9" height="9"><path d="M0 0.5 H8.6 L4.3 8.2Z" fill="#6d7475"/></svg>
<svg class="a" style="left:1627px;top:117px" width="16" height="12" viewBox="0 0 16 12"><defs><linearGradient id="ff123" x1="0" y1="0" x2="0" y2="1"><stop offset="0" stop-color="#ffe052"/><stop offset="1" stop-color="#fff26e"/></linearGradient></defs><path d="M.6 10.600V2.600h1V.700h5.200v1.900h5.700v2" fill="#fbd25c" stroke="#b07a22" stroke-width=".9" stroke-linejoin="round"/><path d="M.5 10.800L2.500 4.500H14.600L12.400 10.800z" fill="url(#ff123)" stroke="#a86c14" stroke-width=".9" stroke-linejoin="round"/><path d="M3.100 5.400H13.500" stroke="#fffdf0" stroke-width="1"/><path d="M.5 10.900H12.400" stroke="#8a4c04" stroke-width="1"/></svg>
<svg class="a" style="left:1632px;top:141.5px" width="9" height="9"><path d="M0 0.5 H8.6 L4.3 8.2Z" fill="#6d7475"/></svg>
<svg class="a" style="left:1644px;top:139px" width="16" height="12" viewBox="0 0 16 12"><defs><linearGradient id="ff145" x1="0" y1="0" x2="0" y2="1"><stop offset="0" stop-color="#ffe052"/><stop offset="1" stop-color="#fff26e"/></linearGradient></defs><path d="M.6 10.600V2.600h1V.700h5.200v1.900h5.700v2" fill="#fbd25c" stroke="#b07a22" stroke-width=".9" stroke-linejoin="round"/><path d="M.5 10.800L2.500 4.500H14.600L12.400 10.800z" fill="url(#ff145)" stroke="#a86c14" stroke-width=".9" stroke-linejoin="round"/><path d="M3.100 5.400H13.500" stroke="#fffdf0" stroke-width="1"/><path d="M.5 10.900H12.400" stroke="#8a4c04" stroke-width="1"/></svg>
<div class="a" style="left:1580px;top:904px;width:160px;height:24px;background:#fff;border:1px solid #c4c4c4;border-top-color:#6a6a6a;border-left-color:#b4b8bc"></div>

<!-- page scrollbar -->
<div class="a" style="left:1904px;top:1px;width:16px;height:949px;background:linear-gradient(90deg,#cfcfcf,#dadada 40%,#e6e6e6)"></div>
<div class="a" style="left:1919px;top:1px;width:1px;height:949px;background:#f4f4f4"></div>
<div class="a" style="left:1905px;top:2px;width:14px;height:14px;background:#fbfbfb"></div>
<div class="a" style="left:1905px;top:935px;width:14px;height:14px;background:#fbfbfb"></div>
<svg class="a" style="left:1905px;top:2px" width="14" height="14"><path d="M4 9 L7 5.300 L10 9Z" fill="#858585"/></svg>
<svg class="a" style="left:1905px;top:935px" width="14" height="14"><path d="M4 5 L7 8.700 L10 5Z" fill="#858585"/></svg>

<!-- status bar -->
<div class="a" style="left:0;top:925px;width:1904px;height:25px;background:#c8c8c8"></div>
<div class="a" style="left:963px;top:934px;width:1px;height:13px;background:#e2e2e2"></div>
<div class="a" style="left:0;top:950px;width:1920px;height:2px;background:#03070a"></div>
<div class="a" style="left:247px;top:951px;width:48px;height:1px;background:#30373a"></div>
<svg class="a" style="left:5px;top:4px;overflow:visible" width="16" height="16" viewBox="0 0 16 16"><rect x="0.6" y="0.6" width="4.6" height="4.6" rx="1.200" fill="#fbfbf9" stroke="#9a9b96" stroke-width=".9"/><path d="M2.2 2.5h1.4" stroke="#d4d5d0" stroke-width=".8"/><rect x="5.6" y="0.6" width="4.6" height="4.6" rx="1.200" fill="#fbfbf9" stroke="#9a9b96" stroke-width=".9"/><path d="M7.199999999999999 2.5h1.4" stroke="#d4d5d0" stroke-width=".8"/><rect x="10.6" y="0.4" width="5" height="5" rx="1.200" fill="#5cb60c" stroke="#4da006" stroke-width=".9"/><rect x="11.7" y="1.9" width="2.8" height="1.8" rx=".6" fill="#b9ee6a"/><rect x="1.8" y="5.7" width="5.2" height="4.4" rx="1.200" fill="#fbfbf9" stroke="#9a9b96" stroke-width=".9"/><path d="M3.4000000000000004 7.6h2.0" stroke="#d4d5d0" stroke-width=".8"/><rect x="7.6" y="5.7" width="5" height="4.4" rx="1.200" fill="#fbfbf9" stroke="#9a9b96" stroke-width=".9"/><path d="M9.2 7.6h1.8" stroke="#d4d5d0" stroke-width=".8"/><rect x="0.5" y="10.6" width="7.6" height="4.9" rx="1.200" fill="#5cb60c" stroke="#4da006" stroke-width=".9"/><rect x="1.6" y="12.1" width="5.3999999999999995" height="1.7" rx=".6" fill="#b9ee6a"/><rect x="8.7" y="10.7" width="5" height="4.8" rx="1.200" fill="#fbfbf9" stroke="#9a9b96" stroke-width=".9"/><path d="M10.299999999999999 12.6h1.8" stroke="#d4d5d0" stroke-width=".8"/></svg>
<svg class="a" style="left:5px;top:25.5px;overflow:visible" width="16" height="16" viewBox="0 0 16 16"><path d="M11 4.700h4.600v8h-2.400V7.300H11z" fill="#f3e8cf" stroke="#b9b2a0" stroke-width=".6"/><path d="M9.300 3.200h1.600v3.200H9.300z" fill="#e4e4e4" stroke="#999" stroke-width=".5"/><path d="M4.600 1.700L.4 6l4.200 4.300V8h2.300c1 0 1.500.5 1.500 1.500v1.600c0 1 .7 1.600 1.600 1.600s1.600-.6 1.600-1.600V8.600c0-3-1.500-4.600-4.300-4.600H4.600z" fill="#f4b13a" stroke="#000" stroke-width="1" stroke-linejoin="round"/><path d="M4 4.300L2 6M4.600 5h2.700c2.100 0 3.200 1 3.200 3" fill="none" stroke="#fde6a8" stroke-width=".9"/></svg>
<svg class="a" style="left:5px;top:46px;overflow:visible" width="16" height="16" viewBox="0 0 16 16"><rect x=".6" y=".6" width="14.800" height="14.800" rx="1.600" fill="#fafafa" stroke="#454545" stroke-width="1.200"/><rect x="3.100" y="4" width="2.800" height="2.800" fill="#6b5ba8"/><path d="M7 5.400h2.800M10.400 5.400h1.400" stroke="#333" stroke-width=".9"/><rect x="3.100" y="9.100" width="2.800" height="2.800" fill="#c24c2a"/><path d="M7 10.500h3.200M10.800 10.500h.8M12 10.500h.8" stroke="#333" stroke-width=".9"/></svg>
<svg class="a" style="left:7px;top:67px;overflow:visible" width="13" height="16" viewBox="0 0 13 16"><defs><linearGradient id="eg" x1="0" y1="0" x2="0" y2="1"><stop offset="0" stop-color="#f4f4f4"/><stop offset="1" stop-color="#d9d9d9"/></linearGradient></defs><path d="M.5.500h8.800l3.200 3.200v11.800H.5z" fill="#fbfbfb" stroke="#8a8b86" stroke-width=".9"/><path d="M2 2.300h6.800v2h2.200v9.400H2z" fill="url(#eg)"/><path d="M9.200.7v3.100h3.100" fill="#fff" stroke="#aaa" stroke-width=".6"/><circle cx="4.700" cy="6.900" r="2.500" fill="#fff" fill-opacity=".8" stroke="#1a1a1a" stroke-width="1.200"/><path d="M6.600 8.900l3.400 3.500" stroke="#1a1a1a" stroke-width="2" stroke-linecap="round"/><path d="M7.700 9.600l-1 .9M8.800 10.700l-1 .9M9.900 11.800l-1 .9" stroke="#ddd" stroke-width=".5"/></svg>
<svg class="a" style="left:5px;top:886px;overflow:visible" width="16" height="16" viewBox="0 0 16 16"><path d="M10.75 8.70 L10.84 7.66 L12.16 7.66 L12.25 8.70 L12.95 8.99 L13.75 8.32 L14.68 9.25 L14.01 10.05 L14.30 10.75 L15.34 10.84 L15.34 12.16 L14.30 12.25 L14.01 12.95 L14.68 13.75 L13.75 14.68 L12.95 14.01 L12.25 14.30 L12.16 15.34 L10.84 15.34 L10.75 14.30 L10.05 14.01 L9.25 14.68 L8.32 13.75 L8.99 12.95 L8.70 12.25 L7.66 12.16 L7.66 10.84 L8.70 10.75 L8.99 10.05 L8.32 9.25 L9.25 8.32 L10.05 8.99Z" fill="#fcfcfc" stroke="#2e2e2e" stroke-width=".8" stroke-linejoin="round" stroke-dasharray="1.800 .6"/><circle cx="11.5" cy="11.5" r="1.100" fill="#fff" stroke="#2e2e2e" stroke-width=".8"/><path d="M10.75 1.80 L10.84 0.76 L12.16 0.76 L12.25 1.80 L12.95 2.09 L13.75 1.42 L14.68 2.35 L14.01 3.15 L14.30 3.85 L15.34 3.94 L15.34 5.26 L14.30 5.35 L14.01 6.05 L14.68 6.85 L13.75 7.78 L12.95 7.11 L12.25 7.40 L12.16 8.44 L10.84 8.44 L10.75 7.40 L10.05 7.11 L9.25 7.78 L8.32 6.85 L8.99 6.05 L8.70 5.35 L7.66 5.26 L7.66 3.94 L8.70 3.85 L8.99 3.15 L8.32 2.35 L9.25 1.42 L10.05 2.09Z" fill="#fcfcfc" stroke="#2e2e2e" stroke-width=".8" stroke-linejoin="round"/><circle cx="11.5" cy="4.6" r="1.100" fill="#fff" stroke="#2e2e2e" stroke-width=".8"/><path d="M3.75 8.70 L3.84 7.66 L5.16 7.66 L5.25 8.70 L5.95 8.99 L6.75 8.32 L7.68 9.25 L7.01 10.05 L7.30 10.75 L8.34 10.84 L8.34 12.16 L7.30 12.25 L7.01 12.95 L7.68 13.75 L6.75 14.68 L5.95 14.01 L5.25 14.30 L5.16 15.34 L3.84 15.34 L3.75 14.30 L3.05 14.01 L2.25 14.68 L1.32 13.75 L1.99 12.95 L1.70 12.25 L0.66 12.16 L0.66 10.84 L1.70 10.75 L1.99 10.05 L1.32 9.25 L2.25 8.32 L3.05 8.99Z" fill="#fcfcfc" stroke="#2e2e2e" stroke-width=".8" stroke-linejoin="round"/><circle cx="4.5" cy="11.5" r="1.100" fill="#fff" stroke="#2e2e2e" stroke-width=".8"/></svg>
<svg class="a" style="left:5px;top:907px;overflow:visible" width="16" height="16" viewBox="0 0 16 16"><path d="M2 2.300C3.500.6 6.200.5 7.500 1l7.700.5v9.800l-1 3.200-3.800-2.600z" fill="#fafafa" stroke="#9a9a96" stroke-width=".8" stroke-linejoin="round"/><path d="M1.600 2.800h6.300c.8 0 1.200.4 1.200 1.200v11.300L5.300 12H1.600c-.8 0-1.200-.4-1.200-1.200V4c0-.8.400-1.200 1.200-1.200z" fill="#fff" stroke="#8a8a86" stroke-width=".9" stroke-linejoin="round"/><path d="M3.500 6.200c0-1.200 2.700-1.300 2.700.1 0 1.100-1.400 1.100-1.400 2.400M4.800 10.200v.1" fill="none" stroke="#6a9ae0" stroke-width="1" stroke-linecap="round"/><path d="M10.500 4.300c0-1.200 2.700-1.300 2.700.1 0 1.100-1.400 1.100-1.400 2.400M11.800 8.300v.1" fill="none" stroke="#9abcec" stroke-width="1" stroke-linecap="round"/></svg>
<svg class="a" style="left:1579px;top:4px;overflow:visible" width="16" height="16" viewBox="0 0 16 16"><rect x=".6" y=".6" width="14.800" height="14.800" rx="1.600" fill="#fafafa" stroke="#454545" stroke-width="1.200"/><rect x="3.100" y="4" width="2.800" height="2.800" fill="#6b5ba8"/><path d="M7 5.400h2.800M10.400 5.400h1.400" stroke="#333" stroke-width=".9"/><rect x="3.100" y="9.100" width="2.800" height="2.800" fill="#c24c2a"/><path d="M7 10.500h3.200M10.800 10.500h.8M12 10.500h.8" stroke="#333" stroke-width=".9"/></svg>
<svg class="a" style="left:1019px;top:777px" width="16" height="15" viewBox="0 0 16 15"><rect x=".5" y=".5" width="15" height="14" rx="2" fill="#fff" stroke="#8b8c88" stroke-width=".9"/><rect x="2" y="2" width="12" height="11" fill="#dddfd9"/><path d="M10.28 11 9.59 9.21H6.62L5.93 11H4.3L7.14 4H9.07L11.9 11ZM8.11 5.08 8.07 5.19Q8.02 5.37 7.94 5.59Q7.86 5.82 6.99 8.11H9.23L8.46 6.1L8.22 5.42Z" fill="#484846"/></svg>
<svg class="a" style="left:1049px;top:777px" width="16" height="15" viewBox="0 0 16 15"><rect x=".5" y=".5" width="15" height="14" rx="2" fill="#fff" stroke="#8b8c88" stroke-width=".9"/><rect x="2" y="2" width="12" height="11" fill="#dddfd9"/><path d="M10.34 11.5 9.93 9.31H6.44L5.13 11.5H4L8.62 4H9.81L11.4 11.5ZM9.08 4.77Q9.01 4.9 8.88 5.13Q8.74 5.36 6.9 8.51H9.77L9.22 5.57Z" fill="#484846"/></svg>
<svg class="a" style="left:1079px;top:777px" width="16" height="15" viewBox="0 0 16 15"><rect x=".5" y=".5" width="15" height="14" rx="2" fill="#fff" stroke="#8b8c88" stroke-width=".9"/><rect x="2" y="2" width="12" height="11" fill="#dddfd9"/><path d="M10.74 10 9.86 7.95H6.36L5.48 10H4.4L7.53 3H8.72L11.8 10ZM8.11 3.72 8.06 3.85Q7.93 4.27 7.66 4.91L6.68 7.21H9.55L8.56 4.9Q8.41 4.56 8.26 4.13Z" fill="#484846"/><path d="M3.600 11.800h9" stroke="#484846" stroke-width="1"/></svg>
<svg class="a" style="left:1106px;top:774px" width="22" height="22" viewBox="0 0 22 22"><rect x="0" y="0" width="22" height="22" fill="#fff"/><path d="M0 21.500h21.500V0" fill="none" stroke="#9a9a9a" stroke-width="1"/><path d="M.5 21V.500H21" fill="none" stroke="#e9e9e9" stroke-width="1"/><path d="M3 3h16v12h-4.500v4H3z" fill="#000"/><path d="M15.300 16.800h4l-2 2.400z" fill="#666"/></svg>
<svg class="a" style="left:1208px;top:806px" width="14" height="14" viewBox="0 0 14 14"><path d="M5.500 1.500h3v4h4v3h-4v4h-3v-4h-4v-3h4z" fill="#b4b4b4" stroke="#3c3c3c" stroke-width="1" stroke-linejoin="round"/></svg>
<svg class="a" style="left:1193px;top:832px" width="18" height="18" viewBox="0 0 18 18"><circle cx="3.100" cy="3.1" r="1.300" fill="#fff" stroke="#58a818" stroke-width=".9"/><circle cx="3.100" cy="8.9" r="1.300" fill="#fff" stroke="#58a818" stroke-width=".9"/><circle cx="3.100" cy="14.4" r="1.300" fill="#fff" stroke="#58a818" stroke-width=".9"/><path d="M8.400 1v10H6.500l5 6 5-6h-1.900V1z" fill="#fdfdfd" stroke="#8a8a8a" stroke-width=".8" stroke-linejoin="round"/><path d="M10.200 1.500v9.800M12.800 1.500v9.800" stroke="#d4d4d4" stroke-width=".7"/></svg>
<div class="a" style="left:0;top:0;width:1920px;height:952px;will-change:transform">
<div class="t" style="left:24.9px;top:4.0px;color:#222e3c;font-weight:bold;transform:scaleX(1.1497) skewX(.05deg)">Tartalom</div>
<div class="t" style="left:24.9px;top:25.0px;color:#1d3b45;font-weight:bold;transform:scaleX(1.1184) skewX(.05deg)">Oldal verziók</div>
<div class="t" style="left:24.9px;top:46.0px;color:#1d3b45;font-weight:bold;transform:scaleX(1.1357) skewX(.05deg)">Teszt</div>
<div class="t" style="left:25.3px;top:67.0px;color:#1d3b45;font-weight:bold;transform:scaleX(1.1238) skewX(.05deg)">Elemtár</div>
<div class="t" style="left:11.0px;top:94.0px;color:#1d3b45;font-weight:bold;transform:scaleX(1.1027) skewX(.05deg)">alapsablonok</div>
<div class="t" style="left:7.8px;top:863.0px;color:#1d3b45;font-weight:bold;transform:scaleX(1.1996) skewX(.05deg)">fájl</div>
<div class="t" style="left:43.9px;top:863.0px;color:#1d3b45;font-weight:bold;transform:scaleX(1.1554) skewX(.05deg)">fájlok</div>
<div class="t" style="left:93.2px;top:863.0px;color:#1d3b45;font-weight:bold;transform:scaleX(1.0963) skewX(.05deg)">online</div>
<div class="t" style="left:145.2px;top:863.0px;color:#1d3b45;font-weight:bold;transform:scaleX(1.1206) skewX(.05deg)">offline</div>
<div class="t" style="left:25.0px;top:886.0px;color:#1d3b45;font-weight:bold;transform:scaleX(1.0935) skewX(.05deg)">Események</div>
<div class="t" style="left:25.0px;top:907.0px;color:#1d3b45;font-weight:bold;transform:scaleX(1.0937) skewX(.05deg)">Hozzászólások</div>
<div class="t" style="left:204.2px;top:3.0px;color:#666;-webkit-text-stroke:.22px;transform:scaleX(1.0965) skewX(.05deg)">Saját tananyagok / Saját tananyag [Balogh Eszter] / szövegmező doksihoz / item 0</div>
<div class="t" style="left:576.0px;top:33.0px;color:#1d3b45;font-weight:bold;transform:scaleX(1.1529) skewX(.05deg)">item 0</div>
<div class="t" style="left:967.2px;top:33.0px;color:#1d3b45;font-weight:bold;transform:scaleX(1.0875) skewX(.05deg)">bal</div>
<div class="t" style="left:1599.2px;top:4.0px;color:#1d3b45;font-weight:bold;transform:scaleX(1.1089) skewX(.05deg)">Oldal navigáló</div>
<div class="t" style="left:1610.2px;top:27.0px;color:#1d3b45;-webkit-text-stroke:.22px;transform:scaleX(1.1109) skewX(.05deg)">ITEM / 265088 / item 0</div>
<div class="t" style="left:1627.3px;top:49.0px;color:#1d3b45;-webkit-text-stroke:.22px;transform:scaleX(1.0528) skewX(.05deg)">FIELD / 0</div>
<div class="t" style="left:1644.1px;top:71.0px;color:#1d3b45;-webkit-text-stroke:.22px;transform:scaleX(1.0460) skewX(.05deg)">FIELD / 1</div>
<div class="t" style="left:1661.2px;top:93.0px;color:#1d3b45;-webkit-text-stroke:.22px;transform:scaleX(1.0768) skewX(.05deg)">OBJECT / text / 1240585</div>
<div class="t" style="left:1644.1px;top:115.0px;color:#1d3b45;-webkit-text-stroke:.22px;transform:scaleX(1.0505) skewX(.05deg)">FIELD / 2</div>
<div class="t" style="left:1661.2px;top:137.0px;color:#1d3b45;-webkit-text-stroke:.22px;transform:scaleX(1.0768) skewX(.05deg)">OBJECT / text / 1240588</div>
<div class="t" style="left:1754.2px;top:907.0px;color:#1d3b45;font-weight:bold;transform:scaleX(1.1424) skewX(.05deg)">létrehoz</div>
<div class="t" style="left:644.1px;top:711.0px;color:#1d3b45;font-weight:bold;transform:scaleX(1.1297) skewX(.05deg)">Szöveg tulajdonságok [0 csatolva]</div>
<div class="t" style="left:1186.6px;top:711.0px;color:#1d3b45;font-weight:bold;transform:scaleX(1.1687) skewX(.05deg)">feltölt</div>
<div class="t" style="left:1264.6px;top:711.0px;color:#1d3b45;font-weight:bold;transform:scaleX(1.1644) skewX(.05deg)">elemtár</div>
<div class="t" style="left:647.1px;top:738.0px;color:#1d3b45;-webkit-text-stroke:.22px;transform:scaleX(1.0916) skewX(.05deg)">10 arial kék közép aláhúzott</div>
<div class="t" style="left:647.1px;top:760.0px;color:#1d3b45;-webkit-text-stroke:.22px;transform:scaleX(1.0990) skewX(.05deg)">15 arial fekete bal</div>
<div class="t" style="left:647.1px;top:782.0px;color:#1d3b45;-webkit-text-stroke:.22px;transform:scaleX(1.1023) skewX(.05deg)">18 arial jobb félkövér</div>
<div class="t" style="left:647.1px;top:804.0px;color:#1d3b45;-webkit-text-stroke:.22px;transform:scaleX(1.0941) skewX(.05deg)">18 arial piros bal</div>
<div class="t" style="left:647.1px;top:826.0px;color:#1d3b45;-webkit-text-stroke:.22px;transform:scaleX(1.0853) skewX(.05deg)">19 arial fehér közép</div>
<div class="t" style="left:985.0px;top:751.0px;color:#555;-webkit-text-stroke:.22px;transform:scaleX(1.0565) skewX(.05deg)">stílus</div>
<div class="t" style="left:1017.9px;top:751.0px;color:#111;-webkit-text-stroke:.22px;transform:scaleX(1.0990) skewX(.05deg)">15 arial fekete bal</div>
<div class="t" style="left:962.2px;top:775.0px;color:#555;-webkit-text-stroke:.22px;transform:scaleX(1.1050) skewX(.05deg)">formátum</div>
<div class="t" style="left:994.3px;top:803.0px;color:#555;-webkit-text-stroke:.22px;transform:scaleX(1.0910) skewX(.05deg)">link</div>
<div class="t" style="left:986.5px;top:831.0px;color:#555;-webkit-text-stroke:.22px;transform:scaleX(1.0581) skewX(.05deg)">meta</div>
<div class="t" style="left:1037.0px;top:833.0px;color:#1d3b45;-webkit-text-stroke:.22px;transform:scaleX(1.0645) skewX(.05deg)">kereshető</div>
<div class="t" style="left:1114.7px;top:833.0px;color:#1d3b45;-webkit-text-stroke:.22px;transform:scaleX(1.0623) skewX(.05deg)">szövegfolyam</div>
<div class="t" style="left:796.7px;top:933.0px;color:#666;-webkit-text-stroke:.22px;transform:scaleX(1.0848) skewX(.05deg)">site engine: NEXIUS 17.21.0.5</div>
<div class="t" style="left:974.0px;top:933.0px;color:#666;-webkit-text-stroke:.22px;transform:scaleX(1.0769) skewX(.05deg)">Balogh Eszter [superuser]</div>
</div>
</body></html>
